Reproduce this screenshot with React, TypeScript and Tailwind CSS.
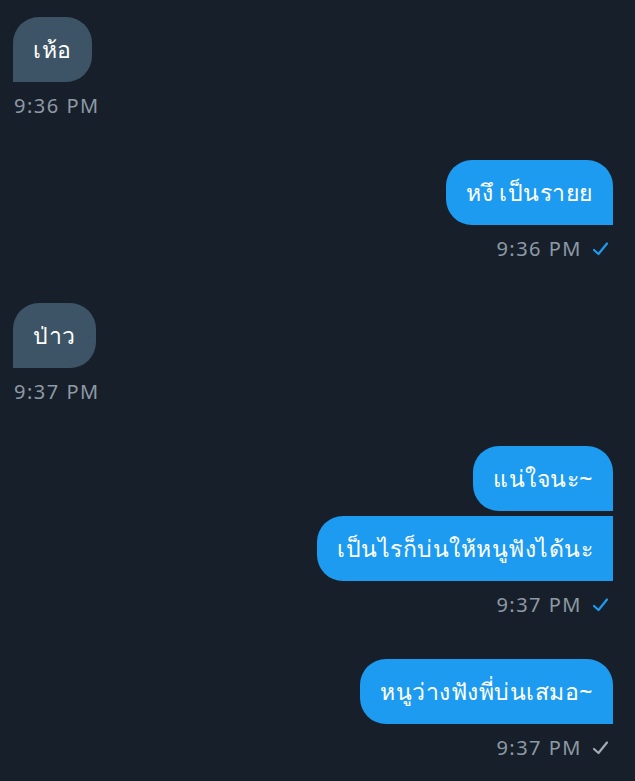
import React from "react";

type Msg = { text: string; mine: boolean };
type Group = { mine: boolean; msgs: string[]; time: string; read?: boolean };

const groups: Group[] = [
  { mine: false, msgs: ["เห้อ"], time: "9:36 PM" },
  { mine: true, msgs: ["หงึ เป็นรายย"], time: "9:36 PM", read: true },
  { mine: false, msgs: ["ป่าว"], time: "9:37 PM" },
  { mine: true, msgs: ["แน่ใจนะ~", "เป็นไรก็บ่นให้หนูฟังได้นะ"], time: "9:37 PM", read: true },
  { mine: true, msgs: ["หนูว่างฟังพี่บ่นเสมอ~"], time: "9:37 PM", read: false },
];

const Check = ({ read }: { read?: boolean }) => (
  <svg width="19" height="18" viewBox="0 0 19 18" className={read ? "text-[#1d9bf0]" : "text-[#a3abb3]"}>
    <path d="M3 10 L7.5 14 L16 3.5" fill="none" stroke="currentColor" strokeWidth="2.2" strokeLinecap="round" strokeLinejoin="round" />
  </svg>
);

const Bubble = ({ text, mine, first }: Msg & { first: boolean }) => {
  const shape = mine
    ? first
      ? "rounded-[26px] rounded-br-none"
      : "rounded-[26px] rounded-tr-none rounded-br-none"
    : "rounded-[26px] rounded-bl-none";
  return (
    <div
      className={`h-[65px] flex items-center px-5 text-[23px] font-medium tracking-[0.5px] text-white ${shape} ${
        mine ? "bg-[#1d9bf0]" : "bg-[#3d5466]"
      }`}
    >
      {text}
    </div>
  );
};

export default function App() {
  return (
    <div
      className="w-[635px] h-[781px] bg-[#17202a] overflow-hidden pt-[17px] pl-[13px] pr-[22px] flex flex-col gap-[42px]"
      style={{ fontFamily: '"Noto Sans", "DejaVu Sans", sans-serif' }}
    >
      {groups.map((g, i) => (
        <div key={i} className={`flex flex-col ${g.mine ? "items-end" : "items-start"}`}>
          <div className={`flex flex-col gap-[5px] ${g.mine ? "items-end" : "items-start"}`}>
            {g.msgs.map((m, j) => (
              <Bubble key={j} text={m} mine={g.mine} first={j === 0} />
            ))}
          </div>
          <div className={`mt-[12px] h-6 flex items-center gap-[9px] text-[20px] text-[#8d99a5] ${g.mine ? "pr-[3px]" : "pl-[1px]"}`}>
            <span className="tracking-[1.5px]">{g.time}</span>
            {g.mine && <Check read={g.read} />}
          </div>
        </div>
      ))}
    </div>
  );
}
